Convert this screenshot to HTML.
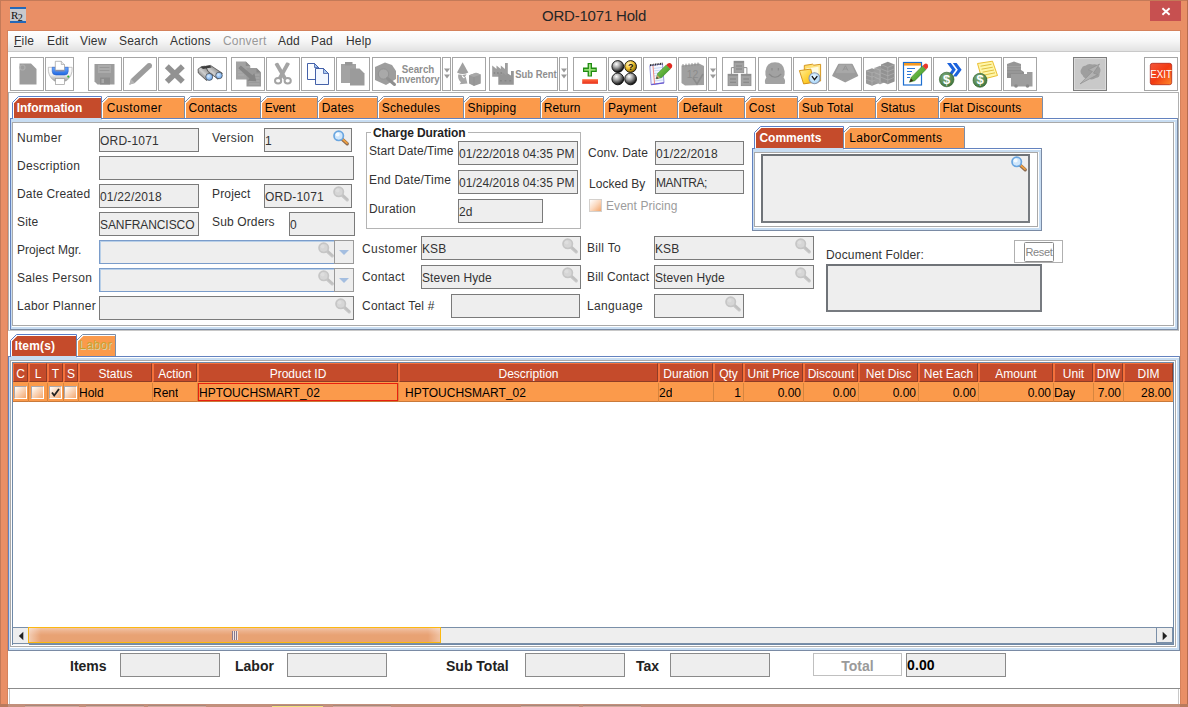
<!DOCTYPE html><html><head><meta charset="utf-8"><title>ORD-1071 Hold</title><style>
*{box-sizing:border-box;margin:0;padding:0}
html,body{width:1188px;height:707px;overflow:hidden;background:#fff}
body{position:relative;font-family:"Liberation Sans",Arial,sans-serif;font-size:12px;color:#333}
.a{position:absolute}
.t{position:absolute;white-space:nowrap;line-height:14px;height:14px;letter-spacing:0.17px}
.f{position:absolute;background:#eee;border:1px solid #7a7a7a;height:24px;white-space:nowrap;overflow:hidden;line-height:24px;padding-left:0;letter-spacing:0.1px;color:#333}
.tb{position:absolute;top:57px;height:34px;width:34px;border:1px solid #a6a6a6;background:#fff}
.tb svg{position:absolute;left:0;top:0}
.hc{position:absolute;top:363px;height:19px;background:#c54b2b;color:#fff;text-align:center;line-height:20px;border-top:1px solid #f4713c;border-left:1px solid #f4713c;border-bottom:1px solid #8e3d26;border-right:1px solid #8e3d26;white-space:nowrap;overflow:hidden;font-size:12px}
.rc{position:absolute;top:383px;height:19px;line-height:20px;color:#000;white-space:nowrap;overflow:hidden}
.cb{position:absolute;width:13px;height:13px;border:1px solid #fff;border-top-color:#a8a8b0;border-left-color:#a8a8b0;background:linear-gradient(135deg,#ffffff 0%,#fbdcc4 40%,#f4a870 100%)}
.bl{position:absolute;font-weight:bold;font-size:14px;line-height:16px;white-space:nowrap;color:#222}
</style></head><body>
<div class="a" style="left:0;top:0;width:1188px;height:707px;background:#e98f66"></div>
<div class="a" style="left:0;top:0;width:1188px;height:1px;background:#c47a58"></div>
<div class="a" style="left:0;top:0;width:1px;height:707px;background:#c47a58"></div>
<div class="a" style="left:1187px;top:0;width:1px;height:707px;background:#b56d4e"></div>
<div class="a" style="left:10px;top:7px;width:16px;height:16px;background:#c9c9cd;border-top:2px solid #2468b8;border-bottom:2px solid #2468b8"></div>
<div class="a" style="left:11px;top:8px;width:16px;height:14px;font-family:'Liberation Serif',serif;font-size:11px;line-height:14px;color:#111;letter-spacing:-0.5px">R<span style="position:relative;top:1.5px;font-size:10px">2</span></div>
<div class="t" style="left:0;width:1188px;top:6px;height:20px;line-height:20px;text-align:center;font-size:15px;letter-spacing:-0.2px;color:#262626">ORD-1071 Hold</div>
<div class="a" style="left:1150px;top:1px;width:31px;height:20px;background:#c75050"></div>
<svg class="a" style="left:1160px;top:6px" width="12" height="11" viewBox="0 0 12 11"><path d="M2.4 2.2L9.6 8.8M9.6 2.2L2.4 8.8" stroke="#fff" stroke-width="1.9"/></svg>
<div class="a" style="left:7px;top:30px;width:1174px;height:675px;background:#d5825c"></div>
<div class="a" style="left:8px;top:31px;width:1172px;height:673px;background:#fff"></div>
<div class="a" style="left:8px;top:31px;width:1172px;height:20px;background:linear-gradient(#ffffff 0%,#f6f6f6 50%,#e2e2e2 100%)"></div>
<div class="a" style="left:8px;top:51px;width:1172px;height:1px;background:#c9c9c9"></div>
<div class="t" style="left:14px;top:33px;font-size:12px;line-height:16px;height:16px;letter-spacing:0.2px;color:#333"><u>F</u>ile</div>
<div class="t" style="left:47px;top:33px;font-size:12px;line-height:16px;height:16px;letter-spacing:0.2px;color:#333">Edit</div>
<div class="t" style="left:80px;top:33px;font-size:12px;line-height:16px;height:16px;letter-spacing:0.2px;color:#333">View</div>
<div class="t" style="left:119px;top:33px;font-size:12px;line-height:16px;height:16px;letter-spacing:0.2px;color:#333">Search</div>
<div class="t" style="left:170px;top:33px;font-size:12px;line-height:16px;height:16px;letter-spacing:0.2px;color:#333">Actions</div>
<div class="t" style="left:223px;top:33px;font-size:12px;line-height:16px;height:16px;letter-spacing:0.2px;color:#999">Convert</div>
<div class="t" style="left:278px;top:33px;font-size:12px;line-height:16px;height:16px;letter-spacing:0.2px;color:#333">Add</div>
<div class="t" style="left:311px;top:33px;font-size:12px;line-height:16px;height:16px;letter-spacing:0.2px;color:#333">Pad</div>
<div class="t" style="left:346px;top:33px;font-size:12px;line-height:16px;height:16px;letter-spacing:0.2px;color:#333">Help</div>
<div class="a" style="left:8px;top:92px;width:1171px;height:239px;border:1px solid #b0b0b0;border-bottom-color:#c8c8c8"></div>
<div class="tb" style="left:10px;width:34px"></div>
<div class="tb" style="left:45px;width:29px"></div>
<div class="tb" style="left:88px;width:34px"></div>
<div class="tb" style="left:123px;width:34px"></div>
<div class="tb" style="left:158px;width:34px"></div>
<div class="tb" style="left:193px;width:34px"></div>
<div class="tb" style="left:231px;width:34px"></div>
<div class="tb" style="left:266px;width:34px"></div>
<div class="tb" style="left:301px;width:34px"></div>
<div class="tb" style="left:336px;width:34px"></div>
<div class="tb" style="left:372px;width:69px"></div>
<div class="tb" style="left:442px;width:9px"></div>
<div class="tb" style="left:452px;width:34px"></div>
<div class="tb" style="left:489px;width:69px"></div>
<div class="tb" style="left:559px;width:9px"></div>
<div class="tb" style="left:573px;width:34px"></div>
<div class="tb" style="left:608px;width:34px"></div>
<div class="tb" style="left:643px;width:34px"></div>
<div class="tb" style="left:678px;width:29px"></div>
<div class="tb" style="left:708px;width:9px"></div>
<div class="tb" style="left:722px;width:34px"></div>
<div class="tb" style="left:758px;width:34px"></div>
<div class="tb" style="left:793px;width:34px"></div>
<div class="tb" style="left:828px;width:34px"></div>
<div class="tb" style="left:863px;width:34px"></div>
<div class="tb" style="left:898px;width:34px"></div>
<div class="tb" style="left:933px;width:34px"></div>
<div class="tb" style="left:968px;width:34px"></div>
<div class="tb" style="left:1003px;width:34px"></div>
<div class="tb" style="left:1073px;background:#c9c9c9;border-color:#7d7d7d;box-shadow:inset 0 0 0 1px #dadada"></div>
<div class="tb" style="left:1144px"></div>
<svg class="a" style="left:0;top:52px" width="1188" height="44" viewBox="0 52 1188 44"><defs>
<radialGradient id="ball" cx="38%" cy="30%" r="72%"><stop offset="0" stop-color="#fff"/><stop offset="0.4" stop-color="#a8a8a8"/><stop offset="0.8" stop-color="#3a3a3a"/><stop offset="1" stop-color="#000"/></radialGradient>
<radialGradient id="bally" cx="35%" cy="30%" r="75%"><stop offset="0" stop-color="#fff6c0"/><stop offset="0.5" stop-color="#f2c230"/><stop offset="1" stop-color="#7a5a00"/></radialGradient>
<radialGradient id="grn" cx="40%" cy="35%" r="70%"><stop offset="0" stop-color="#86b082"/><stop offset="1" stop-color="#3c7238"/></radialGradient>
<radialGradient id="lens" cx="40%" cy="40%" r="70%"><stop offset="0" stop-color="#d8ecff"/><stop offset="1" stop-color="#5b9ae6"/></radialGradient>
<linearGradient id="brl" x1="0" y1="1" x2="1" y2="0"><stop offset="0" stop-color="#2e2e2e"/><stop offset="0.45" stop-color="#d0d0d0"/><stop offset="1" stop-color="#4a4a4a"/></linearGradient><linearGradient id="pbody" x1="0" y1="0" x2="0" y2="1"><stop offset="0" stop-color="#ffffff"/><stop offset="0.55" stop-color="#f2f2f2"/><stop offset="1" stop-color="#9c9c9c"/></linearGradient><linearGradient id="redg" x1="0" y1="0" x2="0" y2="1"><stop offset="0" stop-color="#ff6a40"/><stop offset="1" stop-color="#e83018"/></linearGradient><linearGradient id="fback" x1="0" y1="0" x2="1" y2="1"><stop offset="0" stop-color="#ffd95a"/><stop offset="1" stop-color="#fff6c8"/></linearGradient><radialGradient id="clk" cx="45%" cy="40%" r="65%"><stop offset="0" stop-color="#f2faff"/><stop offset="1" stop-color="#9cd0f8"/></radialGradient><linearGradient id="exitg" x1="0" y1="0" x2="1" y2="1"><stop offset="0" stop-color="#f4563a"/><stop offset="0.5" stop-color="#f23a12"/><stop offset="1" stop-color="#ff8a2a"/></linearGradient>
<linearGradient id="prn" x1="0" y1="0" x2="0" y2="1"><stop offset="0" stop-color="#6aa8ff"/><stop offset="1" stop-color="#1f66e0"/></linearGradient>
<linearGradient id="fold" x1="0" y1="0" x2="1" y2="1"><stop offset="0" stop-color="#fff0a0"/><stop offset="0.6" stop-color="#ffd030"/><stop offset="1" stop-color="#f0b020"/></linearGradient>
<linearGradient id="pen" x1="0" y1="0" x2="1" y2="1"><stop offset="0" stop-color="#8fd65a"/><stop offset="1" stop-color="#2f8a1e"/></linearGradient>
</defs><path d="M19.5 63.5H31L36.5 69V84.5H19.5Z" fill="#9c9c9c"/><circle cx="22.5" cy="67.5" r="2.5" fill="none" stroke="#adadad" stroke-width="1.2"/><path d="M48.3 67.3H72.1Q72.8 76.5 66 81H54.4Q47.6 76.5 48.3 67.3Z" fill="url(#pbody)" stroke="#a0a0a0" stroke-width="0.6"/><path d="M52.2 67.3H68.2V71.3Q68.2 75 64.5 75H56Q52.2 75 52.2 71.3Z" fill="url(#prn)" stroke="#2a5fc8" stroke-width="0.6"/><path d="M55.3 61.3H61.3L64.5 64.5V70.2H55.3Z" fill="#fff" stroke="#9a9a9a" stroke-width="0.7"/><path d="M61.3 61.3V64.5H64.5" fill="#e8e8e8" stroke="#9a9a9a" stroke-width="0.6"/><path d="M55.3 70.2H64.5V71.4H55.3Z" fill="#8a8aa0"/><rect x="55.6" y="78.6" width="9" height="5.9" fill="#fff" stroke="#9a9a9a" stroke-width="0.7"/><circle cx="68.3" cy="76.6" r="1.1" fill="#2db02d"/><path d="M94.5 64H114.5V84.5H97.5L94.5 81.5Z" fill="#9c9c9c"/><rect x="98" y="65" width="13" height="8" fill="#ababab"/><path d="M99.5 67.5H109.5M99.5 70.5H109.5" stroke="#989898" stroke-width="1"/><rect x="100" y="77.5" width="10" height="7" fill="#8c8c8c"/><rect x="101.5" y="79" width="2.5" height="4" fill="#a8a8a8"/><path d="M129.3 84.8L131 79L147.8 63.3Q150 62.3 151.5 64Q152.6 65.6 151.6 67.2L134.8 83Z" fill="#9c9c9c"/><path d="M129.3 84.8L131 79L134.8 83Z" fill="#b4b4b4"/><path d="M166.8 66.2L182.8 81.8M182.8 66.2L166.8 81.8" stroke="#929292" stroke-width="5.6"/><path d="M198 69.2L201.5 66.6L205 66.2L213 75L206.5 80.5L198.3 73Z" fill="url(#brl)" stroke="#3a3a3a" stroke-width="0.7"/><path d="M205.5 66.2L210.5 65.4L222.3 73.2L218 79.2L208 71.5Z" fill="url(#brl)" stroke="#3a3a3a" stroke-width="0.7"/><path d="M200.5 67L210 65.6L211.5 67.5L203 69Z" fill="#3c3c3c"/><circle cx="209.2" cy="76.9" r="3.5" fill="url(#lens)" stroke="#444" stroke-width="0.7"/><circle cx="219" cy="75.5" r="3.3" fill="url(#lens)" stroke="#444" stroke-width="0.7"/><path d="M236 61.5H245.8L250.3 66V79.6H236Z" fill="#a2a2a2"/><path d="M245.8 61.5V66H250.3Z" fill="#8c8c8c"/><path d="M238 69H243M238 72H242M238 75H244" stroke="#b0b0b0" stroke-width="0.8"/><path d="M246.5 68H256.5L261 72.5V86.5H246.5Z" fill="#9a9a9a"/><path d="M256.5 68V72.5H261Z" fill="#868686"/><path d="M255 75H259.5M255 78H259.5M249 81H259.5M249 84H259.5" stroke="#b2b2b2" stroke-width="0.8"/><path d="M238.3 68.2L240.8 65.6L252.5 75.3L254.3 73.2L256.3 81.3L247.5 80.8L249.6 78.6Z" fill="#858585"/><path d="M274.7 64.6Q275.4 62.4 278.3 62.9L286.6 77.6L283.4 79.4Z" fill="#a4a4a4"/><path d="M289.9 64Q289.2 62 286.3 62.5L278 77.6L281.2 79.4Z" fill="#a4a4a4"/><ellipse cx="278.1" cy="80.8" rx="3.1" ry="2.8" fill="none" stroke="#a4a4a4" stroke-width="2"/><ellipse cx="287.7" cy="80.8" rx="3.1" ry="2.8" fill="none" stroke="#a4a4a4" stroke-width="2"/><path d="M307.5 63.5H314.5L318.5 67.5V79.5H307.5Z" fill="#fdfeff" stroke="#2f4f9f" stroke-width="0.9"/><path d="M314.5 63.5V67.5H318.5Z" fill="#a8c8f0" stroke="#2f4f9f" stroke-width="0.7"/><path d="M315.5 68.5H323.5L328.5 73.5V84.5H315.5Z" fill="#f2f7ff" stroke="#2f4f9f" stroke-width="0.9"/><path d="M323.5 68.5V73.5H328.5Z" fill="#a8c8f0" stroke="#2f4f9f" stroke-width="0.7"/><rect x="341" y="64" width="15" height="19" fill="#a3a3a3"/><rect x="345" y="62" width="7.5" height="3.5" fill="#979797"/><path d="M350 68.5H359.5L364.5 73.5V85.5H350Z" fill="#9b9b9b"/><path d="M375 67L385 62.5L392 65L396 71V79L386 85L375 80Z" fill="#9d9d9d"/><circle cx="383.5" cy="74" r="5.2" fill="#a9a9a9" stroke="#939393" stroke-width="1"/><path d="M387.5 78.5L394.5 84.5" stroke="#8f8f8f" stroke-width="3" stroke-linecap="round"/><path d="M444 68.5H450L447 72.5ZM444 74.5H450L447 78.5Z" fill="#9a9a9a"/><path d="M561 68.5H567L564 72.5ZM561 74.5H567L564 78.5Z" fill="#9a9a9a"/><path d="M710 68.5H716L713 72.5ZM710 74.5H716L713 78.5Z" fill="#9a9a9a"/><path d="M462.6 62.2L468.3 72.4Q462.6 75.4 457 72.4Z" fill="#a0a0a0"/><path d="M458.2 74.6Q457.6 80 461 82.2L459.6 84.2L467.4 83.6L465.6 76.4L464 78.6Q461.6 77.6 461.6 74.8Z" fill="#a6a6a6"/><path d="M462 75L466.6 74.2L464.4 77.6Z" fill="#a6a6a6"/><path d="M469 75.2L476 72.7L480.8 74.6V83.4L474 85.9L469 83.6Z" fill="#9a9a9a"/><path d="M469 75.2L476 72.7L480.8 74.6L474 77Z" fill="#a9a9a9"/><path d="M474 77V85.9" stroke="#8e8e8e" stroke-width="0.6"/><path d="M492.2 76.7V65.6L496.5 69V65.6L500.8 69V65.6L505 69V63H507.8V76.7Z" fill="#9e9e9e"/><path d="M498.3 84.8V72.4L502.4 75.4V72.4L506.6 75.4V73L511 75.4V71H513.8V84.8Z" fill="#969696"/><path d="M493.6 73H495.2M497 73H498.6M500.4 73H502M500 80.7H501.8M504.6 80.7H506.4M509.4 80.7H511.2" stroke="#858585" stroke-width="1.5"/><path d="M589.8 63V76.6M583 69.8H596.8" stroke="#218c12" stroke-width="4.4"/><path d="M589.8 64.2V75.4M584.2 69.8H595.6" stroke="#8fdc70" stroke-width="1.8"/><path d="M589.8 64.2V75.4" stroke="#c8f0b0" stroke-width="0.7"/><rect x="582.2" y="79.2" width="15.8" height="4.6" fill="url(#redg)"/><circle cx="617.8" cy="66.5" r="5.9" fill="url(#ball)" stroke="#0a0a0a" stroke-width="0.9"/><circle cx="630.6" cy="66.5" r="5.9" fill="url(#bally)" stroke="#0a0a0a" stroke-width="0.9"/><circle cx="617.8" cy="78.9" r="5.9" fill="url(#ball)" stroke="#0a0a0a" stroke-width="0.9"/><circle cx="630.6" cy="78.9" r="5.9" fill="url(#ball)" stroke="#0a0a0a" stroke-width="0.9"/><path d="M649.8 65.6L662.5 64L664 82.8L651.2 84.6Z" fill="#f6f8ff" stroke="#7a7ad0" stroke-width="0.8"/><path d="M664 82.8L651.2 84.6" stroke="#6a5ad0" stroke-width="1.2"/><path d="M653.5 68.5L662.5 67.4M653.6 71L662.7 69.9M653.8 73.5L662.9 72.4M654 76L663.1 74.9M654.2 78.5L663.3 77.4M654.4 81L663.5 79.9" stroke="#a8c4f0" stroke-width="0.6"/><path d="M653 66L654.6 84" stroke="#f07060" stroke-width="0.8"/><path d="M650 65.2L662.6 63.6" stroke="#222" stroke-width="2" stroke-dasharray="0.9 0.8"/><path d="M656.3 78.8L657.6 73.6L666.3 64.9L670.3 68.9L661.6 77.6Z" fill="url(#pen)" stroke="#2a7a1a" stroke-width="0.5"/><path d="M666.3 64.9L667.8 63.4Q669.8 62.2 671.5 63.9Q673 65.8 671.8 67.4L670.3 68.9Z" fill="#e0281e"/><path d="M656.3 78.8L657.3 75L660 77.8Z" fill="#caa070"/><path d="M656.3 78.8L656.8 76.8L658.2 78.2Z" fill="#222"/><path d="M681.5 65.5L699 63.5L704 66V85L685 85.5L681.5 83Z" fill="#a0a0a0"/><path d="M683 64V67M686 63.7V66.7M689 63.4V66.4M692 63.1V66.1M695 62.8V65.8M698 62.5V65.5" stroke="#8e8e8e" stroke-width="1"/><path d="M693 78L697 84L703 74" fill="none" stroke="#8c8c8c" stroke-width="1.6"/><path d="M734 67.6H731.4V74.5M743.8 67.6H746.9V74.5" fill="none" stroke="#909090" stroke-width="1"/><rect x="734" y="61.2" width="9.8" height="11.5" fill="#a2a2a2" stroke="#8a8a8a" stroke-width="0.7"/><rect x="728" y="74.2" width="9.8" height="11.5" fill="#a2a2a2" stroke="#8a8a8a" stroke-width="0.7"/><rect x="741.2" y="74.2" width="9.8" height="11.5" fill="#a2a2a2" stroke="#8a8a8a" stroke-width="0.7"/><path d="M734 62H743.8M728 75H737.8M741.2 75H751" stroke="#8a8a8a" stroke-width="1.4"/><path d="M736 66H742M736 69H742M730 79H736M730 82.3H736M743.3 79H749M743.3 82.3H749" stroke="#828282" stroke-width="1.1"/><path d="M775 62.2Q783.6 62.2 784.6 71.2Q785 75 783.6 77.6Q786 80.5 784.6 84H765.4Q764 80.5 766.4 77.6Q765 75 765.4 71.2Q766.4 62.2 775 62.2Z" fill="#a2a2a2"/><path d="M772 68V70.6M778.3 68V70.6" stroke="#8a8a8a" stroke-width="1.1"/><path d="M769 74Q775 80.5 781.2 74" fill="none" stroke="#8a8a8a" stroke-width="1.2"/><path d="M804.3 67.2V65.4L812.6 64.2L813.8 65.2L820.6 64.3V81L804.3 83.2Z" fill="url(#fback)" stroke="#d08c10" stroke-width="0.9"/><path d="M806.3 68.5L818.5 66.8V80L806.3 82Z" fill="#fffbe4"/><path d="M799.4 70.6L810.8 69.1L813.6 82.4L803.6 83.9Z" fill="url(#fold)" stroke="#d08c10" stroke-width="0.9"/><circle cx="814.5" cy="78.2" r="5.5" fill="url(#clk)" stroke="#8a96ac" stroke-width="1.1"/><path d="M811.9 76.2L814.5 79.6L817.3 76.2" fill="none" stroke="#111" stroke-width="1.3"/><path d="M838.8 64.6H852L857.4 75.6L845.2 81.6L833 75.6Z" fill="#9c9c9c" stroke="#9c9c9c" stroke-width="1.6" stroke-linejoin="round"/><path d="M839.6 65.2H851.2L854.6 72.6H836.2Z" fill="#a8a8a8" stroke="#a8a8a8" stroke-width="1" stroke-linejoin="round"/><path d="M842.8 70.6L845.4 65.8L848 70.6M843.8 69H847" fill="none" stroke="#959595" stroke-width="1"/><path d="M866 70.6L872 68.2L878 70.6V83.4L872 85.8L866 83.4Z" fill="#989898"/><path d="M866 70.6L872 72.8L878 70.6M872 72.8V85.8M866 74.9L872 77.1L878 74.9M866 79.2L872 81.4L878 79.2" fill="none" stroke="#b2b2b2" stroke-width="0.7"/><path d="M874.5 68L880 65.8L885.5 68V82L880 84.2L874.5 82Z" fill="#9e9e9e"/><path d="M874.5 68L880 70.2L885.5 68M880 70.2V84.2M874.5 72.6L880 74.8M874.5 77.2L880 79.4" fill="none" stroke="#b4b4b4" stroke-width="0.7"/><path d="M881 64.6L887.8 61.8L894.6 64.6V81.4L887.8 84.2L881 81.4Z" fill="#929292"/><path d="M881 64.6L887.8 67.4L894.6 64.6M887.8 67.4V84.2M881 68.8L887.8 71.6L894.6 68.8M881 73L887.8 75.8L894.6 73M881 77.2L887.8 80L894.6 77.2" fill="none" stroke="#b0b0b0" stroke-width="0.7"/><rect x="903.5" y="62.5" width="18" height="22.5" fill="#fff" stroke="#1d6fd0" stroke-width="1.2"/><rect x="904" y="63" width="17" height="2.6" fill="#f59a23"/><path d="M907 68.5H915M907 71.5H912M907 74.5H911M907 77.5H910" stroke="#2a78d8" stroke-width="1.1"/><path d="M909.5 82.2L911.3 77.2L922.5 66L926 69.5L914.8 80.7Z" fill="url(#pen)" stroke="#2a6a1a" stroke-width="0.5"/><path d="M922.5 66L924.5 64Q926.3 63 927.6 64.5Q928.6 66 927.8 67.7L926 69.5Z" fill="#e8382a"/><path d="M909.5 82.2L911 78.5L913.2 80.7Z" fill="#3a2a10"/><path d="M947 63H950.8L955.8 69.8L950.8 76.6H947L952 69.8Z" fill="#1b62dc"/><path d="M952.8 63H956.6L961.6 69.8L956.6 76.6H952.8L957.8 69.8Z" fill="#1b62dc"/><circle cx="946.7" cy="79.5" r="7.3" fill="url(#grn)" stroke="#2c5f2a" stroke-width="0.6"/><path d="M977.5 63.5L992.5 61.2L997.5 75.5L982 79.5Z" fill="#fff6a8" stroke="#e8b820" stroke-width="0.9"/><path d="M980.5 66.2L991.5 64.3M981.5 69.2L992.8 67.2M982.5 72.2L994 70M983.5 75.2L995 72.8" stroke="#e0c040" stroke-width="1"/><circle cx="980" cy="80.3" r="7" fill="url(#grn)" stroke="#2c5f2a" stroke-width="0.6"/><path d="M1007 64L1014 61.5L1021 64V70H1007Z" fill="#969696"/><path d="M1007 70H1021L1024 72V78H1007Z" fill="#8f8f8f"/><path d="M1011 74H1027V72H1032.5V86.5H1011Z" fill="#9d9d9d"/><circle cx="1016" cy="86" r="1.8" fill="#8a8a8a"/><circle cx="1027.5" cy="86" r="1.8" fill="#8a8a8a"/><path d="M1007 66.5H1021M1007 69H1021M1007 72H1022" stroke="#a8a8a8" stroke-width="0.7"/><path d="M1085.5 65.8Q1088.5 63 1092.5 64.6Q1096.5 63.2 1098.8 66.6Q1101.8 69.8 1099.6 73.4Q1100 77.4 1095.8 78Q1092 80.6 1088.4 78.4Q1084 79 1082.6 75.2Q1079 72 1081.6 68.4Q1082.6 65.4 1085.5 65.8Z" fill="#9e9e9e"/><path d="M1099.6 64L1088.4 69.8L1092.4 71.4L1080.1 83.9L1097.6 74.6L1093.4 73.1Z" fill="#b2b2b2" stroke="#8c8c8c" stroke-width="0.6" stroke-linejoin="round"/><rect x="1150.3" y="63.3" width="21.4" height="21.4" rx="2.2" fill="url(#exitg)" stroke="#a8160a" stroke-width="0.7"/></svg>
<div class="a" style="left:378.2px;top:63.04px;width:80px;text-align:center;white-space:nowrap;font-size:11px;line-height:12.65px;color:#8f8f8f;font-weight:bold;letter-spacing:0px;transform:scaleX(0.89)">Search</div>
<div class="a" style="left:378.4px;top:72.64px;width:80px;text-align:center;white-space:nowrap;font-size:11px;line-height:12.65px;color:#8f8f8f;font-weight:bold;letter-spacing:0px;transform:scaleX(0.87)">Inventory</div>
<div class="a" style="left:496.20000000000005px;top:68.44px;width:80px;text-align:center;white-space:nowrap;font-size:11px;line-height:12.65px;color:#8f8f8f;font-weight:bold;letter-spacing:0px;transform:scaleX(0.86)">Sub Rent</div>
<div class="a" style="left:590.7px;top:61.65px;width:80px;text-align:center;white-space:nowrap;font-size:9px;line-height:10.35px;color:#111;font-weight:bold;letter-spacing:0px;transform:scaleX(1.0)">?</div>
<div class="a" style="left:652.5px;top:68.49px;width:80px;text-align:center;white-space:nowrap;font-size:10.5px;line-height:12.07px;color:#8c8c8c;font-weight:normal;letter-spacing:0px;transform:scaleX(1.0)">12</div>
<div class="a" style="left:906.7px;top:72.53px;width:80px;text-align:center;white-space:nowrap;font-size:13px;line-height:14.95px;color:#fff;font-weight:bold;letter-spacing:0px;transform:scaleX(1.0)">$</div>
<div class="a" style="left:940.0px;top:73.23px;width:80px;text-align:center;white-space:nowrap;font-size:13px;line-height:14.95px;color:#fff;font-weight:bold;letter-spacing:0px;transform:scaleX(1.0)">$</div>
<div class="a" style="left:1121.0px;top:68.49px;width:80px;text-align:center;white-space:nowrap;font-size:10.5px;line-height:12.07px;color:#fff;font-weight:normal;letter-spacing:0px;transform:scaleX(0.93)">EXIT</div>
<div class="a" style="left:10px;top:118px;width:1168px;height:212px;background:#c8ddf2"></div><div class="a" style="left:10px;top:118px;width:1168px;height:1px;background:#6382bf"></div><div class="a" style="left:10px;top:118px;width:1px;height:212px;background:#6382bf"></div><div class="a" style="left:1177px;top:118px;width:1px;height:212px;background:#7a8ba5"></div><div class="a" style="left:10px;top:329px;width:1168px;height:1px;background:#7a8ba5"></div><div class="a" style="left:12px;top:122px;width:1163px;height:205px;background:#fff"></div><div class="a" style="left:12px;top:122px;width:1162px;height:204px;background:#fff;border:1px solid #a9a9a9"></div>
<svg class="a" style="left:0;top:96px" width="1188" height="22" viewBox="0 96 1188 22" shape-rendering="crispEdges"><path d="M12.5 118V102.5L18.5 96.5H101.5V118Z" fill="#fff"/><path d="M14 118V103.3L19.3 98H101V118Z" fill="#c54b2b" shape-rendering="geometricPrecision"/><path d="M12.5 118V102.5L18.5 96.5H101.5V118" fill="none" stroke="#5b7fc8" stroke-width="1" shape-rendering="geometricPrecision"/><path d="M101.5 118V102.5L107.5 96.5H184.5V118Z" fill="#fff"/><path d="M103 118V103.3L108.3 98H184V118Z" fill="#fb9a4b" shape-rendering="geometricPrecision"/><path d="M101.5 118V102.5L107.5 96.5H184.5V118" fill="none" stroke="#7a8da8" stroke-width="1" shape-rendering="geometricPrecision"/><path d="M184.5 118V102.5L190.5 96.5H260.5V118Z" fill="#fff"/><path d="M186 118V103.3L191.3 98H260V118Z" fill="#fb9a4b" shape-rendering="geometricPrecision"/><path d="M184.5 118V102.5L190.5 96.5H260.5V118" fill="none" stroke="#7a8da8" stroke-width="1" shape-rendering="geometricPrecision"/><path d="M260.5 118V102.5L266.5 96.5H317.5V118Z" fill="#fff"/><path d="M262 118V103.3L267.3 98H317V118Z" fill="#fb9a4b" shape-rendering="geometricPrecision"/><path d="M260.5 118V102.5L266.5 96.5H317.5V118" fill="none" stroke="#7a8da8" stroke-width="1" shape-rendering="geometricPrecision"/><path d="M317.5 118V102.5L323.5 96.5H377.5V118Z" fill="#fff"/><path d="M319 118V103.3L324.3 98H377V118Z" fill="#fb9a4b" shape-rendering="geometricPrecision"/><path d="M317.5 118V102.5L323.5 96.5H377.5V118" fill="none" stroke="#7a8da8" stroke-width="1" shape-rendering="geometricPrecision"/><path d="M377.5 118V102.5L383.5 96.5H463.5V118Z" fill="#fff"/><path d="M379 118V103.3L384.3 98H463V118Z" fill="#fb9a4b" shape-rendering="geometricPrecision"/><path d="M377.5 118V102.5L383.5 96.5H463.5V118" fill="none" stroke="#7a8da8" stroke-width="1" shape-rendering="geometricPrecision"/><path d="M463.5 118V102.5L469.5 96.5H540.5V118Z" fill="#fff"/><path d="M465 118V103.3L470.3 98H540V118Z" fill="#fb9a4b" shape-rendering="geometricPrecision"/><path d="M463.5 118V102.5L469.5 96.5H540.5V118" fill="none" stroke="#7a8da8" stroke-width="1" shape-rendering="geometricPrecision"/><path d="M540.5 118V102.5L546.5 96.5H603.5V118Z" fill="#fff"/><path d="M542 118V103.3L547.3 98H603V118Z" fill="#fb9a4b" shape-rendering="geometricPrecision"/><path d="M540.5 118V102.5L546.5 96.5H603.5V118" fill="none" stroke="#7a8da8" stroke-width="1" shape-rendering="geometricPrecision"/><path d="M603.5 118V102.5L609.5 96.5H677.5V118Z" fill="#fff"/><path d="M605 118V103.3L610.3 98H677V118Z" fill="#fb9a4b" shape-rendering="geometricPrecision"/><path d="M603.5 118V102.5L609.5 96.5H677.5V118" fill="none" stroke="#7a8da8" stroke-width="1" shape-rendering="geometricPrecision"/><path d="M677.5 118V102.5L683.5 96.5H744.5V118Z" fill="#fff"/><path d="M679 118V103.3L684.3 98H744V118Z" fill="#fb9a4b" shape-rendering="geometricPrecision"/><path d="M677.5 118V102.5L683.5 96.5H744.5V118" fill="none" stroke="#7a8da8" stroke-width="1" shape-rendering="geometricPrecision"/><path d="M744.5 118V102.5L750.5 96.5H797.5V118Z" fill="#fff"/><path d="M746 118V103.3L751.3 98H797V118Z" fill="#fb9a4b" shape-rendering="geometricPrecision"/><path d="M744.5 118V102.5L750.5 96.5H797.5V118" fill="none" stroke="#7a8da8" stroke-width="1" shape-rendering="geometricPrecision"/><path d="M797.5 118V102.5L803.5 96.5H875.5V118Z" fill="#fff"/><path d="M799 118V103.3L804.3 98H875V118Z" fill="#fb9a4b" shape-rendering="geometricPrecision"/><path d="M797.5 118V102.5L803.5 96.5H875.5V118" fill="none" stroke="#7a8da8" stroke-width="1" shape-rendering="geometricPrecision"/><path d="M875.5 118V102.5L881.5 96.5H938.5V118Z" fill="#fff"/><path d="M877 118V103.3L882.3 98H938V118Z" fill="#fb9a4b" shape-rendering="geometricPrecision"/><path d="M875.5 118V102.5L881.5 96.5H938.5V118" fill="none" stroke="#7a8da8" stroke-width="1" shape-rendering="geometricPrecision"/><path d="M938.5 118V102.5L944.5 96.5H1042.5V118Z" fill="#fff"/><path d="M940 118V103.3L945.3 98H1042V118Z" fill="#fb9a4b" shape-rendering="geometricPrecision"/><path d="M938.5 118V102.5L944.5 96.5H1042.5V118" fill="none" stroke="#7a8da8" stroke-width="1" shape-rendering="geometricPrecision"/></svg><div class="t" style="left:16.7px;top:101px;font-size:12px;color:#fff;font-weight:bold;letter-spacing:-0.045px;">Information</div><div class="t" style="left:106.7px;top:101px;font-size:12px;color:#000;letter-spacing:0.436px;">Customer</div><div class="t" style="left:188.45px;top:101px;font-size:12px;color:#000;letter-spacing:0.174px;">Contacts</div><div class="t" style="left:264.7px;top:101px;font-size:12px;color:#000;letter-spacing:-0.037px;">Event</div><div class="t" style="left:321.7px;top:101px;font-size:12px;color:#000;letter-spacing:0.178px;">Dates</div><div class="t" style="left:381.7px;top:101px;font-size:12px;color:#000;letter-spacing:0.273px;">Schedules</div><div class="t" style="left:467.45px;top:101px;font-size:12px;color:#000;letter-spacing:0.285px;">Shipping</div><div class="t" style="left:543.7px;top:101px;font-size:12px;color:#000;letter-spacing:0.161px;">Return</div><div class="t" style="left:607.95px;top:101px;font-size:12px;color:#000;letter-spacing:0.163px;">Payment</div><div class="t" style="left:682.7px;top:101px;font-size:12px;color:#000;letter-spacing:0.21px;">Default</div><div class="t" style="left:748.7px;top:101px;font-size:12px;color:#000;letter-spacing:0.453px;">Cost</div><div class="t" style="left:801.7px;top:101px;font-size:12px;color:#000;letter-spacing:0.214px;">Sub Total</div><div class="t" style="left:880.45px;top:101px;font-size:12px;color:#000;letter-spacing:0.12px;">Status</div><div class="t" style="left:942.45px;top:101px;font-size:12px;color:#000;letter-spacing:0.212px;">Flat Discounts</div>
<div class="a" style="left:102px;top:119px;width:1075px;height:1px;background:#fff"></div>
<div class="a" style="left:13px;top:118px;width:88px;height:1px;background:#c8ddf2"></div>
<div class="t" style="left:17px;top:131px;;letter-spacing:0.427px">Number</div>
<div class="f" style="left:99px;top:128px;width:100px;;letter-spacing:0.193px">ORD-1071</div>
<div class="t" style="left:212px;top:131px;;letter-spacing:0.281px">Version</div>
<div class="f" style="left:264px;top:128px;width:88px;">1<svg class="a" style="right:1px;top:0" width="20" height="20" viewBox="0 0 20 20"><path d="M12.2 10.2L17.2 14.8" stroke="#8a6a50" stroke-width="3.4" stroke-linecap="round"/><path d="M12.4 10L17 14.2" stroke="#f0a040" stroke-width="1.8" stroke-linecap="round"/><circle cx="8.7" cy="6.8" r="4.7" fill="#cfe6fb" stroke="#6aa6e0" stroke-width="1.7"/><circle cx="7.6" cy="5.6" r="2" fill="#f4faff"/></svg></div>
<div class="t" style="left:17px;top:159px;;letter-spacing:0.293px">Description</div>
<div class="f" style="left:99px;top:156px;width:255px;"></div>
<div class="t" style="left:17px;top:187px;;letter-spacing:0.156px">Date Created</div>
<div class="f" style="left:99px;top:184px;width:100px;;letter-spacing:0.174px">01/22/2018</div>
<div class="t" style="left:212px;top:187px;;letter-spacing:0.163px">Project</div>
<div class="f" style="left:264px;top:184px;width:88px;;letter-spacing:0.193px">ORD-1071<svg class="a" style="right:1px;top:0" width="20" height="20" viewBox="0 0 20 20"><path d="M12.2 10.2L17.2 14.8" stroke="#c8c8c8" stroke-width="3.4" stroke-linecap="round"/><path d="M12.4 10L17 14.2" stroke="#c0c0c0" stroke-width="1.8" stroke-linecap="round"/><circle cx="8.7" cy="6.8" r="4.7" fill="#d6d6d6" stroke="#c6c6c6" stroke-width="1.7"/><circle cx="7.6" cy="5.6" r="2" fill="#dedede"/></svg></div>
<div class="t" style="left:17px;top:215px;;letter-spacing:0.203px">Site</div>
<div class="f" style="left:99px;top:212px;width:100px;;letter-spacing:-0.079px">SANFRANCISCO</div>
<div class="t" style="left:212px;top:215px;;letter-spacing:0.139px">Sub Orders</div>
<div class="f" style="left:289px;top:212px;width:66px;">0</div>
<div class="t" style="left:17px;top:243px;;letter-spacing:0.039px">Project Mgr.</div>
<div class="t" style="left:17px;top:271px;;letter-spacing:0.323px">Sales Person</div>
<div class="t" style="left:17px;top:299px;;letter-spacing:0.278px">Labor Planner</div>
<div class="f" style="left:99px;top:296px;width:255px;"><svg class="a" style="right:1px;top:0" width="20" height="20" viewBox="0 0 20 20"><path d="M12.2 10.2L17.2 14.8" stroke="#c8c8c8" stroke-width="3.4" stroke-linecap="round"/><path d="M12.4 10L17 14.2" stroke="#c0c0c0" stroke-width="1.8" stroke-linecap="round"/><circle cx="8.7" cy="6.8" r="4.7" fill="#d6d6d6" stroke="#c6c6c6" stroke-width="1.7"/><circle cx="7.6" cy="5.6" r="2" fill="#dedede"/></svg></div>
<div class="f" style="left:99px;top:240px;width:236px;border-color:#7a9cca;box-shadow:inset 1px 1px 0 #b8cfe8"><svg class="a" style="right:-1px;top:0" width="20" height="20" viewBox="0 0 20 20"><path d="M12.2 10.2L17.2 14.8" stroke="#c8c8c8" stroke-width="3.4" stroke-linecap="round"/><path d="M12.4 10L17 14.2" stroke="#c0c0c0" stroke-width="1.8" stroke-linecap="round"/><circle cx="8.7" cy="6.8" r="4.7" fill="#d6d6d6" stroke="#c6c6c6" stroke-width="1.7"/><circle cx="7.6" cy="5.6" r="2" fill="#dedede"/></svg></div>
<div class="f" style="left:334px;top:240px;width:20px;border-color:#9a9a9a"><svg class="a" style="left:4px;top:9px" width="10" height="6" viewBox="0 0 10 6"><path d="M0 0H10L5 5Z" fill="#a4bee0"/></svg></div>
<div class="f" style="left:99px;top:268px;width:236px;border-color:#7a9cca;box-shadow:inset 1px 1px 0 #b8cfe8"><svg class="a" style="right:-1px;top:0" width="20" height="20" viewBox="0 0 20 20"><path d="M12.2 10.2L17.2 14.8" stroke="#c8c8c8" stroke-width="3.4" stroke-linecap="round"/><path d="M12.4 10L17 14.2" stroke="#c0c0c0" stroke-width="1.8" stroke-linecap="round"/><circle cx="8.7" cy="6.8" r="4.7" fill="#d6d6d6" stroke="#c6c6c6" stroke-width="1.7"/><circle cx="7.6" cy="5.6" r="2" fill="#dedede"/></svg></div>
<div class="f" style="left:334px;top:268px;width:20px;border-color:#9a9a9a"><svg class="a" style="left:4px;top:9px" width="10" height="6" viewBox="0 0 10 6"><path d="M0 0H10L5 5Z" fill="#a4bee0"/></svg></div>
<div class="a" style="left:366px;top:132px;width:215px;height:97px;border:1px solid #b4b4b4"></div>
<div class="t" style="left:371px;top:126px;background:#fff;padding:0 2px;font-weight:bold;color:#222;letter-spacing:-0.1px">Charge Duration</div>
<div class="t" style="left:369px;top:144px;;letter-spacing:0.061px">Start Date/Time</div>
<div class="f" style="left:458px;top:141px;width:120px;;letter-spacing:0.039px">01/22/2018 04:35 PM</div>
<div class="t" style="left:369px;top:173px;;letter-spacing:0.185px">End Date/Time</div>
<div class="f" style="left:458px;top:170px;width:120px;;letter-spacing:0.039px">01/24/2018 04:35 PM</div>
<div class="t" style="left:369px;top:202px;;letter-spacing:0.205px">Duration</div>
<div class="f" style="left:458px;top:199px;width:85px;">2d</div>
<div class="t" style="left:588px;top:146px;;letter-spacing:0.086px">Conv. Date</div>
<div class="f" style="left:655px;top:141px;width:89px;;letter-spacing:0.174px">01/22/2018</div>
<div class="t" style="left:589px;top:177px;;letter-spacing:0.023px">Locked By</div>
<div class="f" style="left:655px;top:170px;width:89px;;letter-spacing:-0.429px">MANTRA;</div>
<div class="cb" style="left:589px;top:199px;border-color:#d4d0cc;background:linear-gradient(135deg,#ffffff 0%,#fbd8be 50%,#f3a66c 100%)"></div>
<div class="t" style="left:606px;top:199px;color:#9c9c9c;letter-spacing:0.061px">Event Pricing</div>
<div class="t" style="left:362px;top:242px;;letter-spacing:0.423px">Customer</div>
<div class="f" style="left:421px;top:236px;width:160px;">KSB<svg class="a" style="right:1px;top:0" width="20" height="20" viewBox="0 0 20 20"><path d="M12.2 10.2L17.2 14.8" stroke="#c8c8c8" stroke-width="3.4" stroke-linecap="round"/><path d="M12.4 10L17 14.2" stroke="#c0c0c0" stroke-width="1.8" stroke-linecap="round"/><circle cx="8.7" cy="6.8" r="4.7" fill="#d6d6d6" stroke="#c6c6c6" stroke-width="1.7"/><circle cx="7.6" cy="5.6" r="2" fill="#dedede"/></svg></div>
<div class="t" style="left:362px;top:270px;;letter-spacing:0.192px">Contact</div>
<div class="f" style="left:421px;top:265px;width:160px;">Steven Hyde<svg class="a" style="right:1px;top:0" width="20" height="20" viewBox="0 0 20 20"><path d="M12.2 10.2L17.2 14.8" stroke="#c8c8c8" stroke-width="3.4" stroke-linecap="round"/><path d="M12.4 10L17 14.2" stroke="#c0c0c0" stroke-width="1.8" stroke-linecap="round"/><circle cx="8.7" cy="6.8" r="4.7" fill="#d6d6d6" stroke="#c6c6c6" stroke-width="1.7"/><circle cx="7.6" cy="5.6" r="2" fill="#dedede"/></svg></div>
<div class="t" style="left:362px;top:299px;;letter-spacing:0.213px">Contact Tel #</div>
<div class="f" style="left:451px;top:294px;width:129px;"></div>
<div class="t" style="left:587px;top:241px;;letter-spacing:0.315px">Bill To</div>
<div class="f" style="left:654px;top:236px;width:160px;">KSB<svg class="a" style="right:1px;top:0" width="20" height="20" viewBox="0 0 20 20"><path d="M12.2 10.2L17.2 14.8" stroke="#c8c8c8" stroke-width="3.4" stroke-linecap="round"/><path d="M12.4 10L17 14.2" stroke="#c0c0c0" stroke-width="1.8" stroke-linecap="round"/><circle cx="8.7" cy="6.8" r="4.7" fill="#d6d6d6" stroke="#c6c6c6" stroke-width="1.7"/><circle cx="7.6" cy="5.6" r="2" fill="#dedede"/></svg></div>
<div class="t" style="left:587px;top:270px;;letter-spacing:0.129px">Bill Contact</div>
<div class="f" style="left:654px;top:265px;width:160px;">Steven Hyde<svg class="a" style="right:1px;top:0" width="20" height="20" viewBox="0 0 20 20"><path d="M12.2 10.2L17.2 14.8" stroke="#c8c8c8" stroke-width="3.4" stroke-linecap="round"/><path d="M12.4 10L17 14.2" stroke="#c0c0c0" stroke-width="1.8" stroke-linecap="round"/><circle cx="8.7" cy="6.8" r="4.7" fill="#d6d6d6" stroke="#c6c6c6" stroke-width="1.7"/><circle cx="7.6" cy="5.6" r="2" fill="#dedede"/></svg></div>
<div class="t" style="left:587px;top:299px;;letter-spacing:0.326px">Language</div>
<div class="f" style="left:654px;top:294px;width:90px;"><svg class="a" style="right:1px;top:0" width="20" height="20" viewBox="0 0 20 20"><path d="M12.2 10.2L17.2 14.8" stroke="#c8c8c8" stroke-width="3.4" stroke-linecap="round"/><path d="M12.4 10L17 14.2" stroke="#c0c0c0" stroke-width="1.8" stroke-linecap="round"/><circle cx="8.7" cy="6.8" r="4.7" fill="#d6d6d6" stroke="#c6c6c6" stroke-width="1.7"/><circle cx="7.6" cy="5.6" r="2" fill="#dedede"/></svg></div>
<div class="a" style="left:752px;top:148px;width:290px;height:83px;background:#c8ddf2"></div><div class="a" style="left:752px;top:148px;width:290px;height:1px;background:#6382bf"></div><div class="a" style="left:752px;top:148px;width:1px;height:83px;background:#6382bf"></div><div class="a" style="left:1041px;top:148px;width:1px;height:83px;background:#7a8ba5"></div><div class="a" style="left:752px;top:230px;width:290px;height:1px;background:#7a8ba5"></div><div class="a" style="left:754px;top:152px;width:285px;height:76px;background:#fff"></div><div class="a" style="left:754px;top:152px;width:284px;height:75px;background:#fff;border:1px solid #a9a9a9"></div>
<svg class="a" style="left:0;top:126px" width="1188" height="22" viewBox="0 126 1188 22" shape-rendering="crispEdges"><path d="M754.5 148V132.5L760.5 126.5H843.5V148Z" fill="#fff"/><path d="M756 148V133.3L761.3 128H843V148Z" fill="#c54b2b" shape-rendering="geometricPrecision"/><path d="M754.5 148V132.5L760.5 126.5H843.5V148" fill="none" stroke="#5b7fc8" stroke-width="1" shape-rendering="geometricPrecision"/><path d="M843.5 148V132.5L849.5 126.5H964.5V148Z" fill="#fff"/><path d="M845 148V133.3L850.3 128H964V148Z" fill="#fb9a4b" shape-rendering="geometricPrecision"/><path d="M843.5 148V132.5L849.5 126.5H964.5V148" fill="none" stroke="#7a8da8" stroke-width="1" shape-rendering="geometricPrecision"/></svg><div class="t" style="left:759.4000000000001px;top:131px;font-size:12px;color:#fff;font-weight:bold;letter-spacing:0.011px;">Comments</div><div class="t" style="left:849.2px;top:131px;font-size:12px;color:#000;letter-spacing:0.345px;">LaborComments</div>
<div class="a" style="left:844px;top:149px;width:197px;height:1px;background:#fff"></div>
<div class="a" style="left:755px;top:148px;width:88px;height:1px;background:#c8ddf2"></div>
<div class="a" style="left:761px;top:154px;width:269px;height:69px;background:#eee;border:2px solid #6f7378;border-right-color:#777b80;border-bottom-color:#777b80"></div>
<div class="a" style="left:1008px;top:155px;width:21px;height:20px"><svg class="a" style="right:1px;top:0" width="20" height="20" viewBox="0 0 20 20"><path d="M12.2 10.2L17.2 14.8" stroke="#8a6a50" stroke-width="3.4" stroke-linecap="round"/><path d="M12.4 10L17 14.2" stroke="#f0a040" stroke-width="1.8" stroke-linecap="round"/><circle cx="8.7" cy="6.8" r="4.7" fill="#cfe6fb" stroke="#6aa6e0" stroke-width="1.7"/><circle cx="7.6" cy="5.6" r="2" fill="#f4faff"/></svg></div>
<div class="t" style="left:826px;top:248px;;letter-spacing:0.164px">Document Folder:</div>
<div class="a" style="left:826px;top:264px;width:216px;height:48px;background:#eee;border:2px solid #6f7378;border-right-color:#777b80;border-bottom-color:#777b80"></div>
<div class="a" style="left:1014px;top:240px;width:49px;height:23px;border:1px solid #b0b0b0;background:#fff"></div>
<div class="a" style="left:1024px;top:242px;width:30px;height:20px;border:1px solid #8c8c8c;border-radius:1.5px;background:#fff"></div>
<div class="t" style="left:1019px;top:245px;font-size:11px;color:#858585;width:40px;text-align:center;letter-spacing:-0.35px">Reset</div>
<div class="a" style="left:8px;top:356px;width:1172px;height:295px;background:#c8ddf2"></div><div class="a" style="left:8px;top:356px;width:1172px;height:1px;background:#6382bf"></div><div class="a" style="left:8px;top:356px;width:1px;height:295px;background:#6382bf"></div><div class="a" style="left:1179px;top:356px;width:1px;height:295px;background:#7a8ba5"></div><div class="a" style="left:8px;top:650px;width:1172px;height:1px;background:#7a8ba5"></div><div class="a" style="left:10px;top:360px;width:1167px;height:288px;background:#fff"></div><div class="a" style="left:10px;top:360px;width:1166px;height:287px;background:#fff;border:1px solid #a9a9a9"></div>
<svg class="a" style="left:0;top:334px" width="1188" height="22" viewBox="0 334 1188 22" shape-rendering="crispEdges"><path d="M10.5 356V340.5L16.5 334.5H76.5V356Z" fill="#fff"/><path d="M12 356V341.3L17.3 336H76V356Z" fill="#c54b2b" shape-rendering="geometricPrecision"/><path d="M10.5 356V340.5L16.5 334.5H76.5V356" fill="none" stroke="#5b7fc8" stroke-width="1" shape-rendering="geometricPrecision"/><path d="M76.5 356V340.5L82.5 334.5H115.5V356Z" fill="#fff"/><path d="M78 356V341.3L83.3 336H115V356Z" fill="#fb9a4b" shape-rendering="geometricPrecision"/><path d="M76.5 356V340.5L82.5 334.5H115.5V356" fill="none" stroke="#7a8da8" stroke-width="1" shape-rendering="geometricPrecision"/></svg><div class="t" style="left:14.7px;top:339px;font-size:12px;color:#fff;font-weight:bold;letter-spacing:0.165px;">Item(s)</div><div class="t" style="left:79.10000000000001px;top:339px;font-size:12px;color:#c7a12c;text-shadow:1px 1px 0 #dcd2a8;margin-top:-1px;letter-spacing:0.399px;">Labor</div>
<div class="a" style="left:77px;top:357px;width:1102px;height:1px;background:#fff"></div>
<div class="a" style="left:11px;top:356px;width:65px;height:1px;background:#c8ddf2"></div>
<div class="a" style="left:12px;top:362px;width:1162px;height:283px;border:1px solid #6f89a7;background:#fff"></div>
<div class="a" style="left:13px;top:363px;width:1160px;height:20px;background:#f4713c"></div>
<div class="a" style="left:13px;top:382px;width:1160px;height:20px;background:#fb9a4b;border-bottom:1px solid #c97a3a"></div>
<div class="hc" style="left:13px;width:15px">C</div>
<div class="hc" style="left:29px;width:18px">L</div>
<div class="a" style="left:28px;top:383px;width:1px;height:19px;background:#d5853f"></div>
<div class="hc" style="left:48px;width:15px">T</div>
<div class="a" style="left:47px;top:383px;width:1px;height:19px;background:#d5853f"></div>
<div class="hc" style="left:64px;width:14px">S</div>
<div class="a" style="left:63px;top:383px;width:1px;height:19px;background:#d5853f"></div>
<div class="hc" style="left:79px;width:73px">Status</div>
<div class="a" style="left:78px;top:383px;width:1px;height:19px;background:#d5853f"></div>
<div class="hc" style="left:153px;width:44px">Action</div>
<div class="a" style="left:152px;top:383px;width:1px;height:19px;background:#d5853f"></div>
<div class="hc" style="left:198px;width:200px">Product ID</div>
<div class="a" style="left:197px;top:383px;width:1px;height:19px;background:#d5853f"></div>
<div class="hc" style="left:399px;width:259px">Description</div>
<div class="a" style="left:398px;top:383px;width:1px;height:19px;background:#d5853f"></div>
<div class="hc" style="left:659px;width:54px">Duration</div>
<div class="a" style="left:658px;top:383px;width:1px;height:19px;background:#d5853f"></div>
<div class="hc" style="left:714px;width:29px">Qty</div>
<div class="a" style="left:713px;top:383px;width:1px;height:19px;background:#d5853f"></div>
<div class="hc" style="left:744px;width:59px">Unit Price</div>
<div class="a" style="left:743px;top:383px;width:1px;height:19px;background:#d5853f"></div>
<div class="hc" style="left:804px;width:54px">Discount</div>
<div class="a" style="left:803px;top:383px;width:1px;height:19px;background:#d5853f"></div>
<div class="hc" style="left:859px;width:59px">Net Disc</div>
<div class="a" style="left:858px;top:383px;width:1px;height:19px;background:#d5853f"></div>
<div class="hc" style="left:919px;width:59px">Net Each</div>
<div class="a" style="left:918px;top:383px;width:1px;height:19px;background:#d5853f"></div>
<div class="hc" style="left:979px;width:74px">Amount</div>
<div class="a" style="left:978px;top:383px;width:1px;height:19px;background:#d5853f"></div>
<div class="hc" style="left:1054px;width:39px">Unit</div>
<div class="a" style="left:1053px;top:383px;width:1px;height:19px;background:#d5853f"></div>
<div class="hc" style="left:1094px;width:29px">DIW</div>
<div class="a" style="left:1093px;top:383px;width:1px;height:19px;background:#d5853f"></div>
<div class="hc" style="left:1124px;width:49px">DIM</div>
<div class="a" style="left:1123px;top:383px;width:1px;height:19px;background:#d5853f"></div>
<div class="rc" style="left:79px">Hold</div>
<div class="rc" style="left:153px">Rent</div>
<div class="rc" style="left:199px">HPTOUCHSMART_02</div>
<div class="rc" style="left:405px">HPTOUCHSMART_02</div>
<div class="rc" style="left:659px">2d</div>
<div class="rc" style="left:1054px">Day</div>
<div class="rc" style="right:447px;text-align:right">1</div>
<div class="rc" style="right:387px;text-align:right">0.00</div>
<div class="rc" style="right:332px;text-align:right">0.00</div>
<div class="rc" style="right:272px;text-align:right">0.00</div>
<div class="rc" style="right:212px;text-align:right">0.00</div>
<div class="rc" style="right:137px;text-align:right">0.00</div>
<div class="rc" style="right:67px;text-align:right">7.00</div>
<div class="rc" style="right:17px;text-align:right">28.00</div>
<div class="a" style="left:198px;top:383px;width:200px;height:18px;border:1px solid #e8200f"></div>
<div class="cb" style="left:14px;top:386px"></div>
<div class="cb" style="left:31px;top:386px"></div>
<div class="cb" style="left:49px;top:386px"></div>
<div class="cb" style="left:64px;top:386px"></div>
<svg class="a" style="left:51px;top:388px" width="9" height="9" viewBox="0 0 9 9"><path d="M1 4.5L3.2 7.5L8 1" fill="none" stroke="#222" stroke-width="1.8"/></svg>
<div class="a" style="left:13px;top:627px;width:1160px;height:17px;background:#eee;border-top:1px solid #7a8fa8;border-bottom:1px solid #7a8fa8"></div>
<div class="a" style="left:13px;top:628px;width:16px;height:16px;background:#eee;border-right:1px solid #7a8fa8;border-bottom:1px solid #7a8fa8;box-shadow:0 1px 0 #f4f4f4"></div>
<svg class="a" style="left:18px;top:631px" width="6" height="10" viewBox="0 0 6 10"><path d="M5.3 0.8V9.2L0.8 5Z" fill="#222"/></svg>
<div class="a" style="left:1156px;top:628px;width:17px;height:15px;background:#eee;border:1px solid #7a8fa8;border-top:none"></div>
<svg class="a" style="left:1162px;top:631px" width="6" height="10" viewBox="0 0 6 10"><path d="M0.7 0.8V9.2L5.2 5Z" fill="#222"/></svg>
<div class="a" style="left:28px;top:627px;width:413px;height:16px;border:1px solid #fbb810;background:linear-gradient(#f1c4a6 0%,#ecb08a 25%,#e8a274 50%,#e8a272 100%)"></div>
<div class="a" style="left:29px;top:628px;width:12px;height:14px;background:linear-gradient(90deg,rgba(255,255,255,0.45),rgba(255,255,255,0))"></div>
<div class="a" style="left:428px;top:628px;width:12px;height:14px;background:linear-gradient(270deg,rgba(255,255,255,0.35),rgba(255,255,255,0))"></div>
<div class="a" style="left:232px;top:631px;width:1px;height:9px;background:#86788c;box-shadow:2px 0 0 #86788c,4px 0 0 #86788c,1px 0 0 #f6e6dc,3px 0 0 #f6e6dc,5px 0 0 #f6e6dc"></div>
<div class="bl" style="left:70px;top:658px;color:#222">Items</div>
<div class="f" style="left:120px;top:653px;width:100px;border-color:#8a8a8a"></div>
<div class="bl" style="left:235px;top:658px;color:#222">Labor</div>
<div class="f" style="left:287px;top:653px;width:100px;border-color:#8a8a8a"></div>
<div class="bl" style="left:446px;top:658px;color:#222">Sub Total</div>
<div class="f" style="left:525px;top:653px;width:100px;border-color:#8a8a8a"></div>
<div class="bl" style="left:636px;top:658px;color:#222">Tax</div>
<div class="f" style="left:670px;top:653px;width:100px;border-color:#8a8a8a"></div>
<div class="a" style="left:813px;top:653px;width:89px;height:23px;border:1px solid #c0c0c0;background:#fff"></div>
<div class="bl" style="left:813px;top:658px;width:89px;text-align:center;color:#9a9a9a">Total</div>
<div class="f" style="left:906px;top:653px;width:100px;border-color:#8a8a8a"><b style="font-size:14px;color:#000;position:relative;top:-1px">0.00</b></div>
<div class="a" style="left:8px;top:688px;width:1172px;height:1px;background:#8c8c8c"></div>
<div class="a" style="left:9px;top:689px;width:1170px;height:15px;border-left:1px solid #c8c8c8;border-right:1px solid #c8c8c8;background:#fff"></div>
<div class="a" style="left:0;top:704px;width:1188px;height:3px;background:#c2907c"></div>
<div class="a" style="left:0;top:704px;width:8px;height:3px;background:#b97a5c"></div><div class="a" style="left:1180px;top:704px;width:8px;height:3px;background:#b97a5c"></div>
<div class="a" style="left:25px;top:705px;width:54px;height:2px;background:#d3aa9c;border-top:1px solid #a8887c"></div>
<div class="a" style="left:86px;top:705px;width:58px;height:2px;background:#d3aa9c;border-top:1px solid #a8887c"></div>
<div class="a" style="left:148px;top:705px;width:58px;height:2px;background:#d3aa9c;border-top:1px solid #a8887c"></div>
<div class="a" style="left:272px;top:705px;width:51px;height:2px;background:#f3e27a;border-top:1px solid #a8887c"></div>
<div class="a" style="left:333px;top:705px;width:58px;height:2px;background:#d3aa9c;border-top:1px solid #a8887c"></div>
<div class="a" style="left:521px;top:705px;width:58px;height:2px;background:#d3aa9c;border-top:1px solid #a8887c"></div>
<div class="a" style="left:583px;top:705px;width:58px;height:2px;background:#d3aa9c;border-top:1px solid #a8887c"></div>
</body></html>
